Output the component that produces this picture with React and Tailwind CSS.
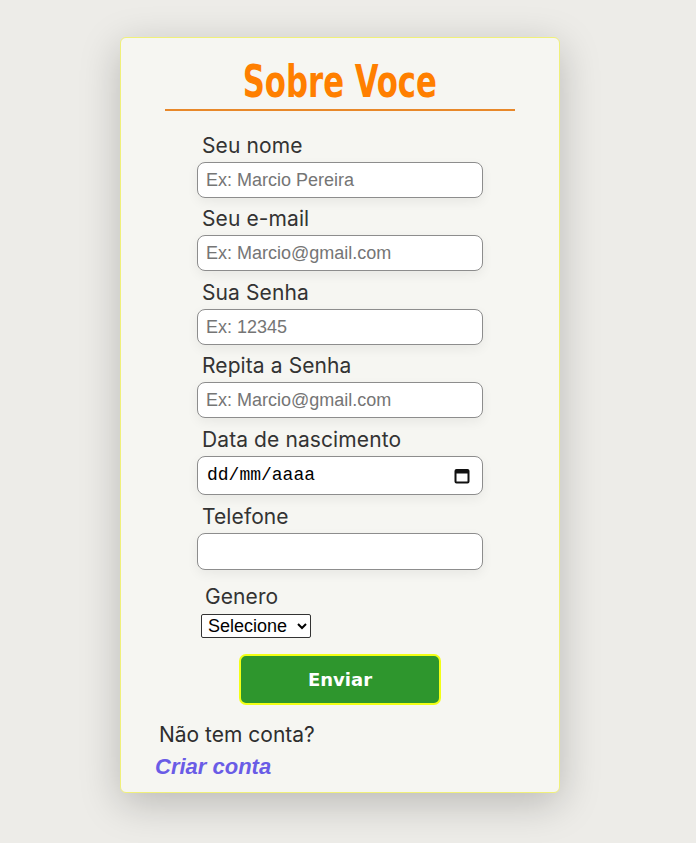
import React from 'react';

const labelCls = "block text-[21px] leading-[23px] mb-[5px] text-[#333] font-['Inter','Noto_Sans',sans-serif] font-normal tracking-[0.1px]";
const inputCls =
  "block w-[286px] h-[36px] rounded-[8px] border border-[#8d8d8d] bg-white px-[8px] text-[18px] font-['Liberation_Sans',Arial,sans-serif] text-black placeholder:text-[#757575] shadow-[0_4px_12px_rgba(0,0,0,0.06)] outline-none";

function Field({ label, placeholder, type = 'text' }) {
  return (
    <div>
      <label className={labelCls + ' pl-[5px]'}>{label}</label>
      <input type={type} placeholder={placeholder} className={inputCls} />
    </div>
  );
}

function CalendarIcon() {
  return (
    <svg width="16" height="16" viewBox="0 0 16 16" fill="none" aria-hidden="true">
      <rect x="1.5" y="2" width="13" height="12.5" rx="1" stroke="#111" strokeWidth="2" />
      <rect x="1.5" y="2" width="13" height="3.5" fill="#111" />
    </svg>
  );
}

export default function App() {
  return (
    <div className="min-h-[843px] w-full bg-[#edece8] flex justify-center pt-[37px] pr-[16px]">
      <div className="w-[440px] h-[756px] rounded-[6px] border border-[#f0f07a] bg-[#f6f6f2] shadow-[0_10px_40px_rgba(0,0,0,0.22)] flex flex-col">
        <h1 className="mt-[19px] text-center text-[45px] leading-[50px] font-bold text-[#ff7f00] font-['DejaVu_Sans_Condensed','DejaVu_Sans',sans-serif]">
          <span className="inline-block scale-x-[0.76]">Sobre Voce</span>
        </h1>
        <div className="mx-[44px] mt-[2px] h-[2px] bg-[#e8882a]" />
        <form className="mt-[23px] pl-[76px] flex flex-col gap-[9px]">
          <Field label="Seu nome" placeholder="Ex: Marcio Pereira" />
          <Field label="Seu e-mail" placeholder="Ex: Marcio@gmail.com" />
          <div className="mt-[1px]">
            <Field label="Sua Senha" placeholder="Ex: 12345" />
          </div>
          <Field label="Repita a Senha" placeholder="Ex: Marcio@gmail.com" />
          <div className="mt-[1px]">
            <label className={labelCls + ' pl-[5px]'}>Data de nascimento</label>
            <div className="flex items-center justify-between w-[286px] h-[39px] rounded-[8px] border border-[#8d8d8d] bg-white pl-[9px] pr-[12px] shadow-[0_4px_12px_rgba(0,0,0,0.06)]">
              <span className="text-[18px] font-['Liberation_Mono','DejaVu_Sans_Mono',monospace] text-black">dd/mm/aaaa</span>
              <CalendarIcon />
            </div>
          </div>
          <div className="mt-[1px]">
            <label className={labelCls + ' pl-[5px]'}>Telefone</label>
            <input type="tel" className={inputCls + ' h-[37px]'} />
          </div>
          <div className="mt-[6px] pl-[4px]">
            <label className={labelCls + ' pl-[4px] !mb-0'}>Genero</label>
            <select className="mt-[6px] h-[24px] w-[110px] border border-[#333] bg-white text-[18px] leading-[20px] text-black font-['Liberation_Sans',Arial,sans-serif] rounded-[2px] pl-[2px]">
              <option>Selecione</option>
              <option>Masculino</option>
              <option>Feminino</option>
            </select>
          </div>
        </form>
        <div className="mt-[16px] flex justify-center">
          <button
            type="button"
            className="w-[202px] h-[51px] rounded-[7px] border-2 border-[#f2ff16] bg-[#2e962d] text-white text-[18px] font-black font-['DejaVu_Sans','Liberation_Sans',sans-serif]"
          >
            Enviar
          </button>
        </div>
        <p className="mt-[17px] ml-[38px] text-[21px] leading-[26px] text-[#2e2e2e] font-['Inter','Noto_Sans',sans-serif]">
          Não tem conta?
        </p>
        <a
          href="#"
          className="mt-[6px] ml-[34px] text-[22px] leading-[26px] italic font-bold text-[#6a5ce6] font-['Liberation_Sans',Arial,sans-serif]"
        >
          Criar conta
        </a>
      </div>
    </div>
  );
}
